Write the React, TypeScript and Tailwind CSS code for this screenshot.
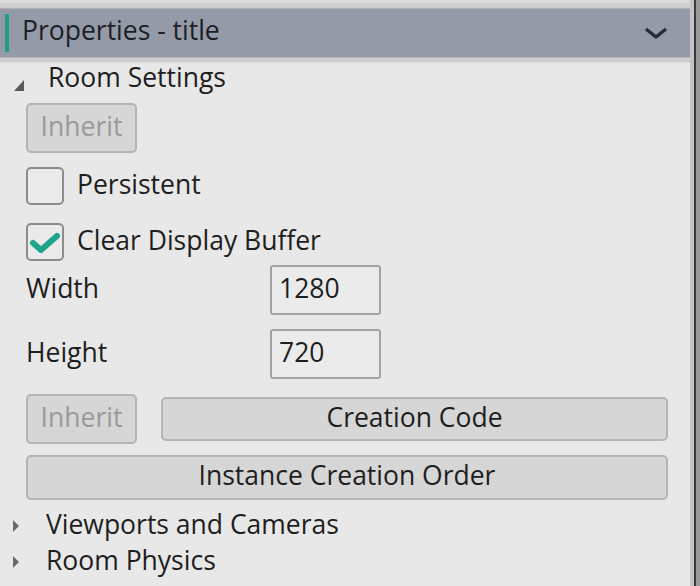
import React from 'react';

const font = { fontFamily: '"Open Sans", "Noto Sans", sans-serif' };

const Expanded = () => (
  <svg width="10" height="11" viewBox="0 0 10 11" className="shrink-0 mt-[12px]">
    <path d="M10 0 L10 11 L0 11 Z" fill="#5a5a5a" />
  </svg>
);

const Collapsed = () => (
  <svg width="8" height="14" viewBox="0 0 8 14" className="shrink-0">
    <path d="M1 1 L7 7 L1 13 Z" fill="#6a6a6a" />
  </svg>
);

const Checkbox: React.FC<{ checked?: boolean }> = ({ checked }) => (
  <div className="w-[38px] h-[38px] rounded-[5px] border-2 border-[#8c8c8c] bg-[#eaeaea] flex items-center justify-center shrink-0">
    {checked && (
      <svg width="32" height="28" viewBox="0 0 32 28">
        <path d="M4 15 L12 22 L28 8" stroke="#1fa38a" strokeWidth="6" fill="none" strokeLinecap="round" strokeLinejoin="round" />
      </svg>
    )}
  </div>
);

const btn = 'rounded-[5px] bg-[#d6d6d6] border-2 border-[#b4b4b4] leading-none pb-[4px]';

const App: React.FC = () => {
  return (
    <div className="w-[700px] h-[586px] flex bg-[#e8e8e8] text-[#1e1e1e] overflow-hidden text-[26.5px]" style={font}>
      <div className="flex-1 flex flex-col">
        {/* top edge */}
        <div className="h-[9px] bg-[#cfcfcf] border-t-[3px] border-t-[#dcdcdc] border-b border-b-[#b0b0b0]" />
        {/* header */}
        <div className="h-[48px] bg-[#959aa9] flex items-center pl-[5px] pr-[22px]">
          <div className="w-[4px] h-[38px] bg-[#1f9e86]" />
          <span className="ml-[13px] leading-none flex-1 text-[#1c1f27] pb-[5px]">Properties - title</span>
          <svg width="24" height="14" viewBox="0 0 24 14">
            <path d="M2 3 L12 11 L22 3" stroke="#2b2d33" strokeWidth="3.5" fill="none" strokeLinejoin="round" />
          </svg>
        </div>
        <div className="h-[6px] bg-[#cdcdcd] border-t border-t-[#b4b4b4] border-b border-b-[#dadada]" />

        {/* content */}
        <div className="flex-1 flex flex-col pl-[26px] pr-[22px]">
          <div className="h-[32px] flex items-center -ml-[12px]">
            <Expanded />
            <span className="ml-[24px] leading-none pb-[4px]">Room Settings</span>
          </div>

          <button className={`mt-[8px] w-[111px] h-[50px] text-[#9a9a9a] ${btn}`}>Inherit</button>

          <div className="mt-[14px] h-[38px] flex items-center">
            <Checkbox />
            <span className="ml-[13px] leading-none pb-[4px]">Persistent</span>
          </div>

          <div className="mt-[18px] h-[38px] flex items-center">
            <Checkbox checked />
            <span className="ml-[13px] leading-none pb-[4px]">Clear Display Buffer</span>
          </div>

          <div className="mt-[4px] h-[50px] flex items-center">
            <span className="w-[244px] leading-none pb-[3px]">Width</span>
            <div className="w-[111px] h-[50px] border-2 border-[#a3a3a3] rounded-[3px] bg-[#ebebeb] flex items-center pl-[7px] leading-none pb-[3px]">1280</div>
          </div>

          <div className="mt-[14px] h-[50px] flex items-center">
            <span className="w-[244px] leading-none pb-[3px]">Height</span>
            <div className="w-[111px] h-[50px] border-2 border-[#a3a3a3] rounded-[3px] bg-[#ebebeb] flex items-center pl-[7px] leading-none pb-[3px]">720</div>
          </div>

          <div className="mt-[15px] flex items-center gap-[24px]">
            <button className={`w-[111px] h-[50px] text-[#9a9a9a] ${btn}`}>Inherit</button>
            <button className={`flex-1 h-[44px] text-[#1e1e1e] ${btn}`}>Creation Code</button>
          </div>

          <button className={`mt-[11px] w-full h-[45px] text-[#1e1e1e] ${btn}`}>Instance Creation Order</button>

          <div className="mt-[8px] h-[36px] flex items-center -ml-[14px]">
            <Collapsed />
            <span className="ml-[26px] leading-none pb-[4px]">Viewports and Cameras</span>
          </div>
          <div className="h-[36px] flex items-center -ml-[14px]">
            <Collapsed />
            <span className="ml-[26px] leading-none pb-[4px]">Room Physics</span>
          </div>
        </div>
      </div>
      {/* right edge */}
      <div className="w-[10px] flex">
        <div className="w-[4px] bg-[#c4c4c4]" />
        <div className="w-[2px] bg-[#3a3a3a]" />
        <div className="w-[4px] bg-[#9a9a9a]" />
      </div>
    </div>
  );
};

export default App;
